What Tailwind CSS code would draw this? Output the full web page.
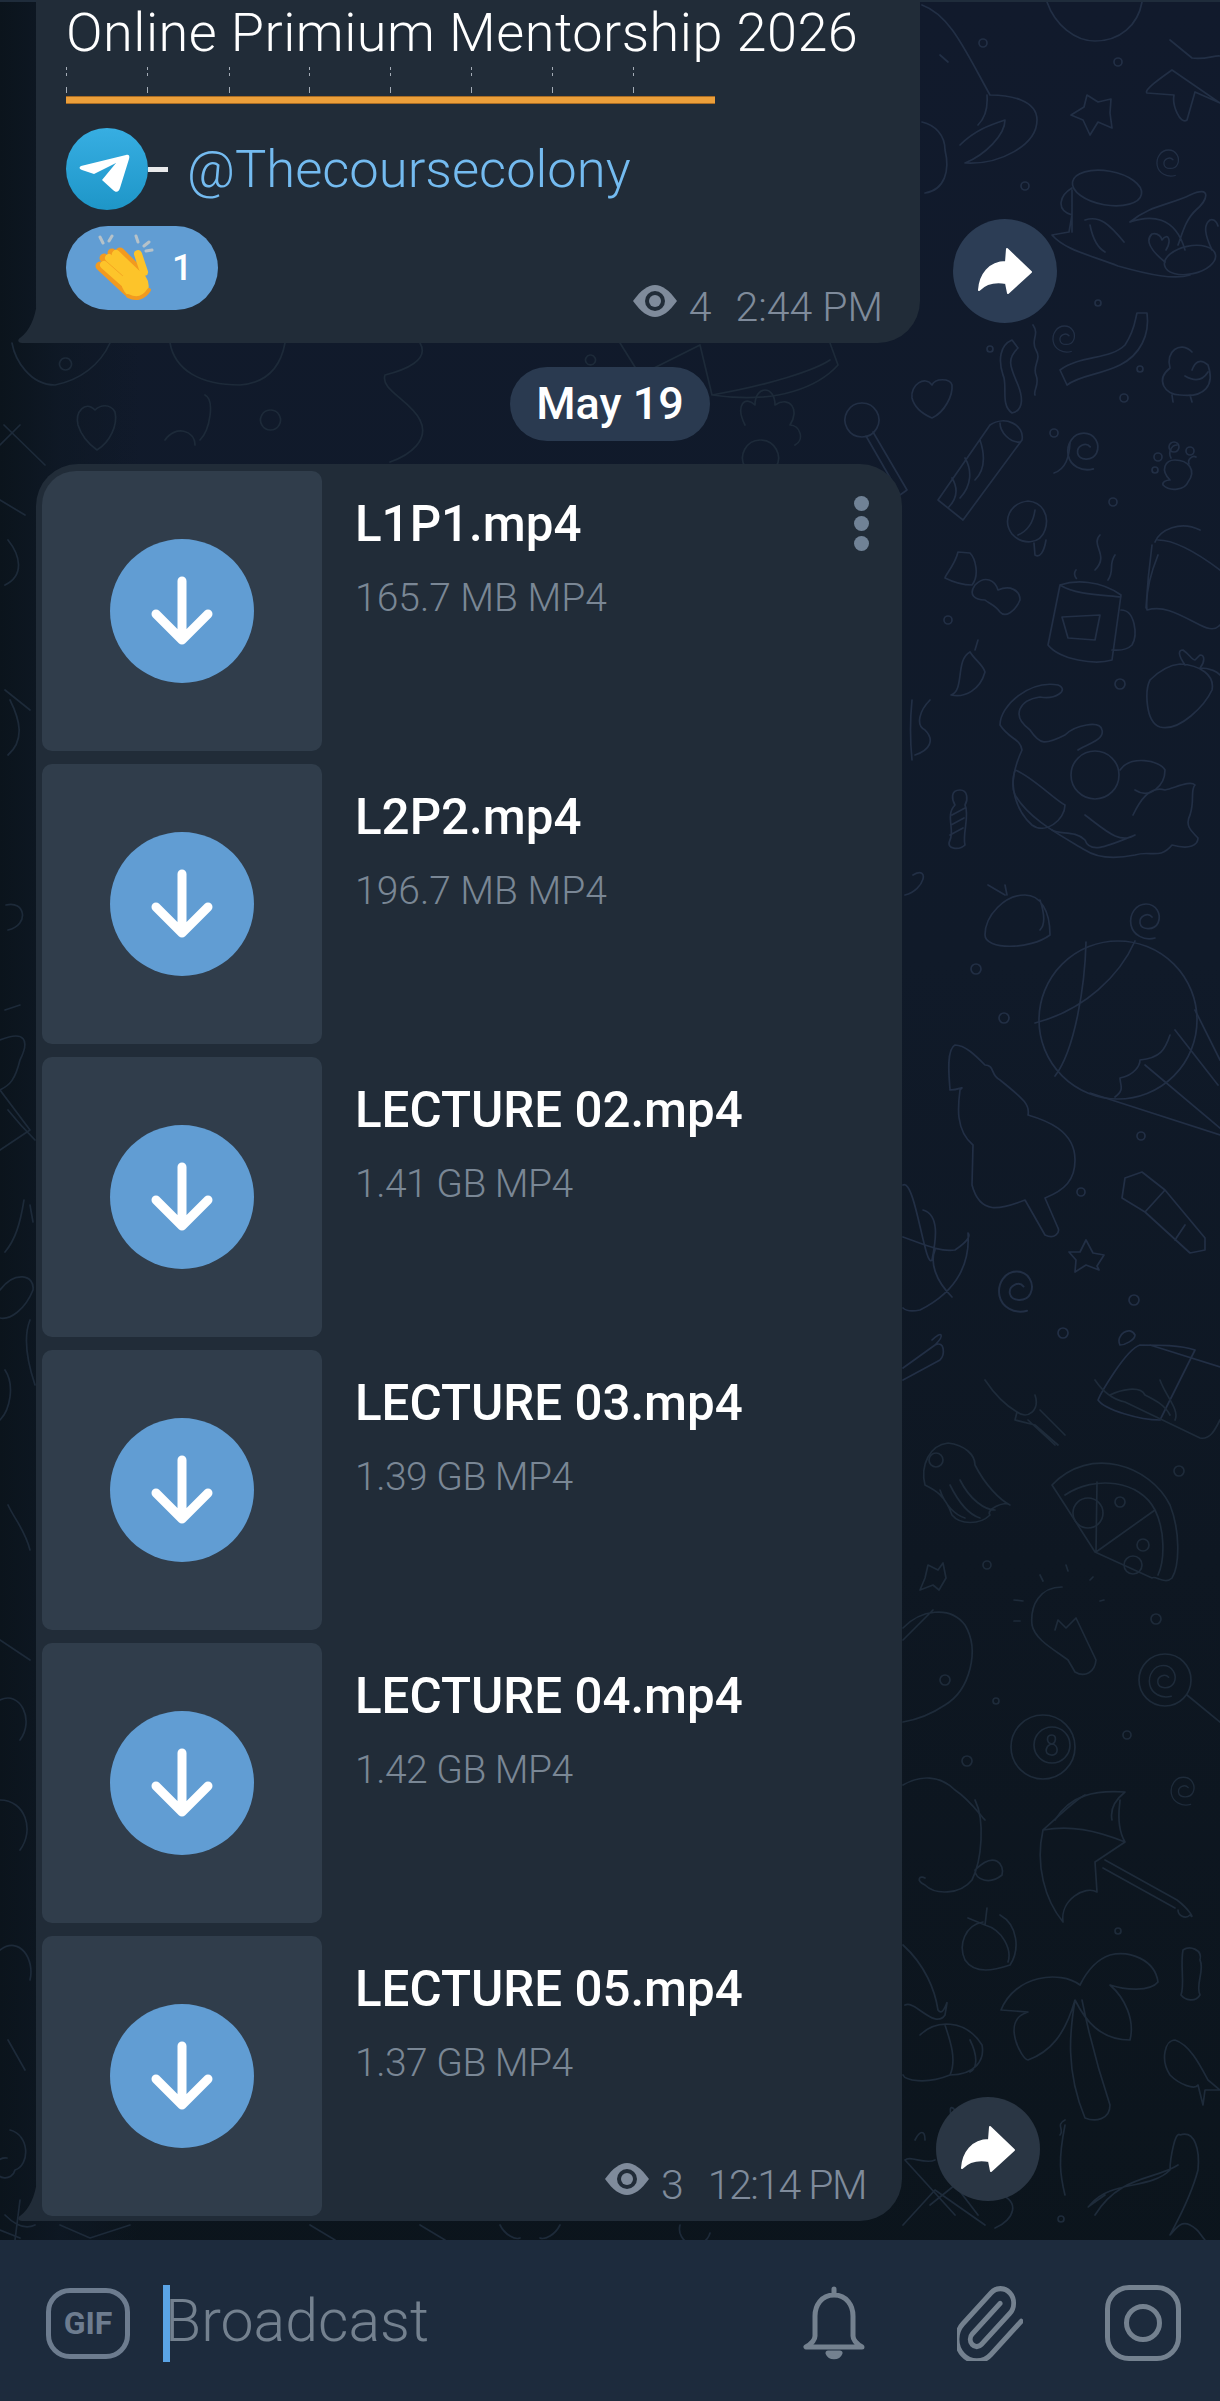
<!DOCTYPE html>
<html lang="en">
<head>
    <meta charset="UTF-8">
    <meta name="viewport" content="width=device-width, initial-scale=1.0">
    <title>Broadcast</title>
    <script src="https://cdn.jsdelivr.net/npm/@tailwindcss/browser@4"></script>
</head>
<body class="bg-[#0e1722]">
<div class="relative w-[1220px] h-[2401px] overflow-hidden flex flex-col font-['Roboto',sans-serif] bg-[linear-gradient(180deg,#111a2c_0%,#101a29_40%,#0e1722_65%,#0b141b_100%)]">

    <!-- wallpaper -->
    <div class="absolute inset-0 bg-[linear-gradient(90deg,#0b141c_0px,#0e1824cc_60px,#0e182400_140px)]"></div>
    <svg class="absolute inset-0" width="1220" height="2401" viewBox="0 0 1220 2401" fill="none" stroke-width="1.7" stroke-linecap="round" stroke-linejoin="round">
        <defs>
            <path id="spiral" d="M4 -3 C0 -8 -9 -4 -8 3 C-7 10 6 11 10 3 C14 -6 8 -16 -2 -16 C-12 -16 -19 -6 -17 5 C-15 15 -4 21 7 18"/>
        </defs>
        <g stroke="#222f45">
            <!-- top right -->
            <path d="M1047 2C1055 25 1075 41 1095 41C1120 41 1138 25 1142 2"/>
            <path d="M922 5C950 15 965 50 990 95C1010 95 1037 100 1037 120C1037 145 1000 165 965 163C985 155 1005 135 1005 120C990 125 975 130 960 145M987 95C988 108 985 118 978 125"/>
            <path d="M922 122C935 125 945 135 945 150C950 170 945 190 925 193M940 55L948 62"/>
            <path d="M1170 40L1192 58C1205 60 1215 55 1220 56M1220 103L1195 92L1187 120C1180 125 1172 105 1174 95L1147 93C1143 90 1165 75 1172 70Z"/>
            <path d="M1087 95L1098 102L1111 99L1110 113L1112 128L1098 122L1090 135L1083 120L1071 115L1084 107Z"/>
            <circle cx="983" cy="43" r="4"/><circle cx="1118" cy="62" r="4"/><circle cx="1025" cy="186" r="4"/><circle cx="1098" cy="303" r="3"/><circle cx="990" cy="349" r="3"/><circle cx="1140" cy="369" r="3"/><circle cx="1124" cy="398" r="4"/><circle cx="1054" cy="433" r="4"/><circle cx="1113" cy="502" r="4"/><circle cx="948" cy="620" r="4"/><circle cx="1120" cy="684" r="5"/>
            <use href="#spiral" transform="translate(1170 162) scale(.75)"/>
            <use href="#spiral" transform="translate(1066 338) scale(.75)"/>
            <use href="#spiral" transform="translate(1086 450) scale(1.05)"/>
            <ellipse cx="1107" cy="188" rx="35" ry="17" transform="rotate(10 1107 188)"/>
            <path d="M1072 188C1060 195 1055 210 1072 215L1069 232L1052 235C1065 250 1090 255 1118 266C1150 275 1175 280 1190 275M1072 190L1072 232M1085 220C1100 215 1110 225 1124 242M1090 225C1093 240 1098 248 1105 252M1130 222C1150 205 1170 205 1190 195C1212 185 1208 200 1196 210C1185 220 1182 235 1178 245M1130 222C1150 215 1175 215 1185 250"/>
            <ellipse cx="1190" cy="260" rx="26" ry="14" transform="rotate(-12 1190 260)"/>
            <path d="M1165 262C1150 250 1145 240 1152 234C1158 232 1162 238 1162 240C1168 232 1172 240 1166 250M1212 250C1205 235 1203 225 1210 220C1216 218 1218 226 1218 226"/>
            <path d="M1060 370C1080 355 1110 360 1125 345C1135 330 1135 320 1137 313L1147 313C1150 335 1140 355 1120 365C1100 375 1080 375 1067 385Z"/>
            <path d="M1192 352C1180 340 1165 352 1170 368C1155 380 1165 395 1180 395C1205 398 1215 385 1208 365C1200 358 1195 362 1192 370M1172 395L1173 402M1190 395L1192 402M1185 376C1195 382 1203 380 1208 372"/>
            <path d="M932 385C925 375 910 385 912 398C915 410 925 415 932 418C945 412 953 395 952 385C950 378 935 378 932 385Z"/>
            <path d="M1033 325C1040 335 1030 340 1036 350C1042 360 1032 365 1036 375C1040 385 1033 390 1035 395M1012 340C1000 345 998 360 1003 375C1008 385 1000 405 1012 413C1025 410 1022 395 1018 385C1012 370 1005 360 1018 348Z"/>
            <path d="M990 425L938 500L963 520L1022 440C1025 425 1005 415 990 425ZM1000 423C1000 432 1010 443 1020 442M980 440C985 455 985 470 975 480M965 458C972 470 972 485 960 498M952 478C958 488 958 498 948 508"/>
            <path d="M862 403a17 17 0 1 1 -.1 0M873 432L907 490L900 495L866 436"/>
            <path d="M1070 443c-1 14 -4 26 -16 30M1177 445c-6 0 -9 8 -6 13M1196 457c-3 -2 -9 2 -7 7"/>
            <path d="M1170 480C1160 470 1165 460 1175 460C1188 460 1197 470 1188 482C1185 490 1170 492 1163 485C1162 482 1166 480 1170 480Z"/>
            <circle cx="1158" cy="457" r="4"/><circle cx="1174" cy="447" r="5"/><circle cx="1155" cy="470" r="3"/><circle cx="1190" cy="451" r="4"/>
            <path d="M1028 501C1010 503 1002 520 1012 534C1022 545 1040 545 1045 530C1050 515 1042 502 1028 501ZM1035 510C1033 525 1025 532 1018 535M1034 543L1035 555C1040 558 1044 552 1046 540"/>
            <path d="M958 552C955 565 945 575 945 578C955 583 965 585 972 585C980 575 975 558 970 553ZM975 585C985 575 995 580 998 590C1010 585 1020 590 1020 600C1015 612 1005 618 1000 612C995 605 988 603 985 600C975 600 968 595 975 585Z"/>
            <path d="M1158 555C1152 570 1145 590 1147 610C1165 605 1180 615 1200 625C1210 630 1215 630 1220 625M1158 540C1175 540 1200 555 1220 570M1152 545C1150 560 1147 590 1146 608M1155 542C1160 530 1180 520 1200 530"/>
            <path d="M1060 585L1048 645C1060 660 1095 665 1112 660L1121 595C1100 580 1075 580 1060 585ZM1060 585C1075 595 1105 595 1121 597M1121 610C1135 610 1138 635 1132 645C1125 652 1115 650 1112 650M1062 617L1100 615L1095 640L1068 638Z"/>
            <path d="M1076 570C1072 575 1078 580 1076 578M1100 535C1090 545 1110 555 1095 570M1115 555C1108 565 1115 570 1108 580"/>
            <path d="M1180 664C1200 665 1215 675 1212 690C1205 705 1180 732 1160 727C1145 722 1145 690 1150 680C1160 670 1170 665 1180 664ZM1185 665C1178 655 1178 650 1183 650C1190 655 1192 660 1195 660L1200 655C1205 655 1205 662 1200 668C1210 668 1218 672 1220 675"/>
            <path d="M970 652C955 660 965 690 951 695C965 698 980 690 985 672C983 665 975 660 970 652M975 650L978 640"/>
            <path d="M1058 685C1030 680 1000 705 1000 725C1010 740 1020 738 1022 750C1015 765 1010 785 1015 795C1030 820 1060 835 1085 850C1100 860 1120 858 1135 855C1150 850 1160 860 1172 845C1190 850 1198 845 1198 838C1190 830 1185 825 1190 815C1195 800 1190 790 1195 785C1190 780 1175 788 1165 790C1150 785 1140 800 1133 815M1058 685C1070 690 1055 700 1040 697C1020 700 1010 715 1030 730C1040 745 1045 745 1065 735C1075 725 1100 720 1102 730C1105 740 1085 745 1078 750"/>
            <circle cx="1095" cy="775" r="24"/>
            <path d="M1015 770C1030 775 1055 800 1065 805C1065 820 1045 835 1032 825C1015 810 1010 785 1015 770ZM1085 815C1105 830 1120 845 1135 835C1110 845 1090 855 1085 840C1075 830 1060 835 1052 830M1120 770C1130 755 1160 760 1165 770C1165 785 1150 800 1135 790"/>
            <path d="M930 700C920 710 915 725 925 730C935 740 930 750 915 755M912 700C910 720 910 740 912 760M913 875C930 865 925 890 905 895"/>
            <path d="M960 790C950 790 952 800 955 805C945 815 955 830 950 840C945 850 960 850 965 845C962 835 970 815 965 805C968 800 968 790 960 790ZM952 815L965 808M951 825L964 818M950 835L963 828"/>
            <path d="M1025 895C1005 895 985 915 985 935C985 950 1030 950 1050 935C1050 910 1040 895 1025 895ZM988 885L1005 895M1005 885L1007 895M1040 900C1045 915 1045 925 1040 930"/>
            <use href="#spiral" transform="translate(1148 920) scale(1)"/>
            <!-- balloon and tree -->
            <circle cx="1118" cy="1020" r="79"/>
            <path d="M1086 942C1085 985 1075 1050 1055 1076M1135 941C1120 975 1085 1010 1035 1023M1115 1097C1125 1090 1120 1085 1120 1078C1135 1075 1140 1065 1140 1060C1160 1058 1165 1050 1170 1035M1090 1093L1220 1135M1175 1030L1218 1085M1145 1065L1220 1128M1195 1010L1220 1060"/>
            <path d="M955 1045C945 1050 950 1085 950 1090C960 1090 965 1085 960 1090C958 1105 955 1130 973 1145L972 1185C980 1215 1000 1210 1025 1200L1045 1235C1055 1240 1060 1232 1058 1228L1045 1198C1065 1190 1075 1180 1075 1160C1075 1130 1045 1120 1028 1115C1030 1105 1025 1100 1000 1080C990 1075 995 1065 985 1065C975 1055 965 1045 955 1045Z"/>
            <path d="M1125 1178L1142 1172L1165 1190L1145 1212L1122 1198ZM1145 1212L1190 1253L1205 1250L1205 1238L1165 1190M1175 1240L1185 1225"/>
            <circle cx="1141" cy="1136" r="4"/><circle cx="1081" cy="1192" r="4"/><circle cx="976" cy="969" r="5"/><circle cx="1004" cy="1018" r="5"/><circle cx="1134" cy="1300" r="5"/><circle cx="1063" cy="1333" r="5"/>
            <path d="M1086 1240L1093 1253L1104 1255L1097 1266L1099 1270L1086 1265L1075 1272L1076 1260L1069 1252L1080 1252Z"/>
            <path d="M923 1210C940 1215 936 1240 932 1260C925 1270 915 1178 903 1185M903 1237C925 1245 940 1252 955 1250C970 1240 970 1235 968 1233C970 1260 960 1290 920 1310C910 1312 905 1310 903 1308M935 1250C930 1262 935 1280 952 1297"/>
            <use href="#spiral" transform="translate(1019 1290) scale(1.15)"/>
            <path d="M1120 1345C1115 1335 1130 1325 1135 1335C1135 1340 1125 1345 1120 1345ZM1140 1345C1125 1350 1100 1395 1098 1400C1105 1410 1140 1420 1160 1420L1195 1350C1180 1345 1160 1345 1140 1345ZM1150 1345L1220 1367"/>
            <path d="M903 1368L935 1345C945 1340 945 1355 940 1360L903 1380M935 1345C945 1335 942 1330 932 1340"/>
        </g>
        <g stroke="#1e2b3a">
            <!-- lower right -->
            <path d="M985 1380C995 1395 1005 1405 1017 1412L1015 1420L1035 1425L1058 1445M1028 1420L1055 1445M1040 1410L1065 1435M1035 1395C1040 1410 1028 1420 1017 1412"/>
            <path d="M1095 1380C1105 1395 1115 1400 1125 1402L1200 1438C1210 1440 1215 1430 1220 1420M1110 1395C1120 1390 1140 1385 1145 1395C1155 1400 1165 1405 1170 1415M1160 1380C1165 1395 1180 1410 1175 1420"/>
            <path d="M948 1443C930 1445 920 1465 925 1485C935 1490 945 1495 952 1515C960 1525 980 1525 990 1515C985 1510 1005 1500 1010 1505C1000 1500 985 1485 975 1465C975 1455 965 1445 948 1443ZM940 1490C945 1505 955 1515 965 1518M950 1485C960 1505 970 1515 980 1518M960 1480C970 1500 985 1510 995 1510"/>
            <circle cx="936" cy="1460" r="7"/>
            <path d="M1052 1485C1090 1445 1150 1465 1170 1505C1180 1530 1180 1565 1172 1578C1165 1585 1155 1575 1152 1578L1095 1552L1065 1505ZM1065 1495C1095 1475 1140 1480 1155 1510C1165 1530 1165 1560 1158 1575M1097 1482L1096 1552L1155 1510"/>
            <circle cx="1088" cy="1513" r="15"/><circle cx="1120" cy="1502" r="5"/><circle cx="1143" cy="1545" r="6"/><circle cx="1133" cy="1565" r="9"/>
            <circle cx="1179" cy="1471" r="5"/><circle cx="987" cy="1565" r="4"/><circle cx="1156" cy="1619" r="5"/><circle cx="996" cy="1701" r="3"/><circle cx="1127" cy="1735" r="4"/><circle cx="967" cy="1761" r="5"/><circle cx="945" cy="1680" r="5"/><circle cx="1118" cy="1931" r="3"/><circle cx="1061" cy="2219" r="3"/>
            <path d="M928 1565L938 1570L943 1563L946 1578L939 1590L933 1585L920 1590L925 1578Z"/>
            <path d="M1062 1587C1040 1587 1030 1605 1032 1625C1035 1640 1055 1650 1068 1660L1075 1672C1085 1678 1095 1672 1096 1660L1076 1618L1066 1628L1058 1620L1055 1630M1014 1600L1023 1601M1014 1621L1020 1621M1040 1575L1043 1581M1066 1565L1068 1571M1090 1580L1093 1577M1100 1601L1104 1600"/>
            <circle cx="1165" cy="1680" r="26"/>
            <use href="#spiral" transform="translate(1165 1680) scale(.9)"/>
            <path d="M1187 1695L1220 1722"/>
            <circle cx="1043" cy="1747" r="32"/><circle cx="1052" cy="1745" r="18"/>
            <path d="M1052 1735c-6 0 -6 8 0 9c7 1 7 12 -1 11c-8 -1 -5 -10 1 -11c4 -1 5 -9 0 -9"/>
            <path d="M903 1628C920 1610 950 1605 965 1625C980 1650 970 1690 945 1705C930 1715 915 1720 903 1722M903 1640L933 1610"/>
            <path d="M903 1785C920 1775 940 1775 955 1790C970 1800 980 1815 985 1820M1055 1820C1070 1795 1095 1790 1125 1792C1115 1800 1110 1810 1112 1820"/>
            <use href="#spiral" transform="translate(1185 1790) scale(.8)"/>
            <path d="M1043 1830C1070 1825 1095 1830 1125 1842L1095 1862L1097 1892C1085 1885 1060 1900 1063 1922C1045 1900 1035 1865 1043 1830ZM1043 1830C1060 1815 1075 1800 1085 1795M1125 1842C1115 1825 1120 1805 1120 1800M1105 1860L1177 1900C1190 1910 1195 1920 1190 1915C1185 1920 1178 1915 1178 1910M1103 1868L1175 1908"/>
            <path d="M975 1800C985 1820 982 1860 972 1880C960 1895 935 1895 925 1885C915 1880 920 1875 925 1878M975 1870C995 1850 1005 1865 1002 1875C990 1885 975 1880 975 1870Z"/>
            <path d="M983 1922C965 1925 958 1945 965 1960C975 1975 995 1970 1010 1965C1020 1950 1018 1925 1000 1915M968 1918L985 1925L987 1908M985 1925C1003 1930 1012 1950 1008 1962"/>
            <path d="M1080 1985C1060 1970 1015 1975 1001 2010L1028 2012C1000 2020 1022 2060 1028 2060C1050 2052 1065 2035 1075 2000C1085 2020 1100 2040 1130 2040C1135 2020 1125 1998 1110 1985C1125 1990 1150 1992 1158 1982C1155 1960 1130 1950 1110 1955C1095 1960 1085 1975 1080 1985ZM1075 2000C1070 2030 1065 2070 1085 2118C1095 2122 1110 2120 1110 2105C1100 2075 1090 2040 1082 2000"/>
            <path d="M1183 1950C1190 1945 1203 1950 1200 1960C1205 1970 1195 1985 1200 1995C1195 2003 1185 2000 1181 1995C1185 1985 1180 1965 1183 1950Z"/>
            <path d="M1175 2040C1165 2040 1160 2060 1170 2075C1180 2085 1195 2090 1198 2085L1203 2105L1205 2090L1220 2090L1208 2080C1200 2065 1190 2045 1175 2040Z"/>
            <path d="M903 1945C925 1965 935 1990 938 2010C945 2020 950 1985 945 2015C935 2030 915 2000 905 2005M920 2035C935 2020 965 2018 982 2045C985 2060 975 2075 950 2075C925 2085 905 2080 903 2075M945 2025C950 2040 957 2060 950 2075M970 2040C980 2060 975 2070 970 2072"/>
            <path d="M1065 2120C1055 2125 1065 2130 1060 2135M1065 2125C1058 2160 1060 2175 1065 2195M1090 2205C1110 2180 1150 2190 1170 2170C1170 2160 1175 2130 1180 2135C1195 2130 1200 2150 1198 2170C1190 2200 1175 2225 1170 2235C1175 2230 1180 2220 1190 2225C1200 2230 1200 2235 1205 2240M1095 2215C1120 2175 1155 2180 1178 2165M1105 2195C1090 2205 1085 2210 1090 2205"/>
            <path d="M950 2125C960 2130 965 2110 955 2110C945 2100 955 2125 950 2125ZM905 2160C910 2155 925 2165 935 2160M915 2140C920 2130 925 2130 925 2140M903 2225L935 2190L985 2225M930 2205L955 2185L978 2215M905 2160L955 2215M1000 2195C1020 2200 1015 2220 995 2228"/>
        </g>
        <g stroke="#1d2a39">
            <!-- between the bubbles and down the left edge -->
            <path d="M12 343C15 360 30 385 55 385C80 380 100 365 110 343M65 358a6 6 0 1 0 1 0M170 343C175 370 200 385 240 385C265 383 280 370 285 343"/>
            <path d="M420 343C430 360 405 370 385 375C380 390 410 400 420 420C430 440 410 455 390 462M590 355a5 5 0 1 0 1 0M620 343L640 375L700 345M700 345L712 395C780 405 820 385 838 365L830 343M712 395C770 385 815 370 830 360"/>
            <path d="M95 410C85 400 75 412 78 425C82 438 90 445 97 450C110 442 118 425 115 412C110 403 100 405 95 410Z"/>
            <path d="M4 425L45 465M20 425L0 445M165 440C175 425 195 430 195 445M200 440C210 430 215 400 205 395M270 410a10 10 0 1 0 1 0"/>
            <path d="M760 440a18 18 0 1 0 1 0M745 425C735 405 745 395 755 405C755 385 775 385 775 405C790 395 800 410 790 425C800 425 805 440 795 445"/>
            <path d="M0 500L25 515M8 540C20 555 25 575 5 585M5 690L30 710M10 700C20 720 25 740 8 755M6 905C25 900 30 925 8 930M5 1010L20 1005M0 1040C25 1030 30 1040 20 1060C15 1080 10 1085 0 1090"/>
            <path d="M0 1090L30 1130L0 1150M8 1110C20 1125 30 1135 35 1140M24 1200C20 1225 15 1240 5 1252M30 1205L33 1222M0 1290C15 1270 35 1275 33 1290C25 1310 10 1320 0 1318M30 1320C22 1340 30 1370 35 1385M5 1370C15 1385 10 1410 0 1420"/>
            <path d="M8 1505C15 1520 25 1530 30 1550M0 1640L30 1660M0 1700C20 1690 35 1720 20 1740M0 1800C25 1800 35 1830 20 1850M0 1950C20 1935 35 1960 30 1980M8 2040L25 2070M10 2130C30 2135 30 2165 15 2170a10 10 0 1 1 -8 -12M20 2200L15 2240M5 2215C15 2225 25 2230 35 2225"/>
            <path d="M0 2230L20 2238M60 2225L90 2238L130 2225M310 2225L335 2240M420 2225L445 2240M500 2225C505 2235 515 2240 520 2238M560 2225C555 2235 545 2240 540 2238M680 2225a10 10 0 0 0 30 8"/>
        </g>
    </svg>
    <div class="absolute top-0 left-0 right-0 h-[2px] bg-[#1f2c3b]"></div>

    <!-- messages -->
    <main class="relative flex-1 flex flex-col pl-[36px] overflow-hidden">

        <div class="flex items-end gap-[33px]">
            <div class="relative w-[884px] h-[343px] bg-[#212c38] rounded-br-[42px] pl-[30px] pt-[3px] shrink-0">
                <svg class="absolute left-[-18px] bottom-0" width="19" height="40" viewBox="0 0 19 40"><path d="M19 0V40H4C0 40 -1 37 2 35C12 28 17 14 19 0Z" fill="#212c38"/></svg>
                <p class="text-[54px] leading-[60px] tracking-[0.5px] text-white font-light">Online Primium Mentorship 2026</p>
                <svg class="mt-[4px] block" width="600" height="26" viewBox="0 0 600 26" stroke="#a4acb6" stroke-width="1">
                    <path stroke-dasharray="3 3" d="M.5 0V12M81.5 0V12M163.5 0V12M243.5 0V12M324.5 0V12M405.5 0V12M486.5 0V12M567.5 0V12"/>
                    <path d="M.5 20V26M81.5 20V26M163.5 20V26M243.5 20V26M324.5 20V26M405.5 20V26M486.5 20V26M567.5 20V26"/>
                </svg>
                <div class="mt-[3px] w-[649px] h-[8px] bg-[#ec9f3a] border-y border-[#a86c25]"></div>
                <div class="mt-[24px] flex items-center h-[82px]">
                    <svg width="82" height="82" viewBox="0 0 82 82">
                        <defs><linearGradient id="tg" x1="0" y1="0" x2="0" y2="1"><stop offset="0" stop-color="#37aee2"/><stop offset="1" stop-color="#1e96c8"/></linearGradient></defs>
                        <circle cx="41" cy="41" r="41" fill="url(#tg)"/>
                        <path d="M15 38L60 27C63 26 64 28 63 31L54 60C53 64 50 65 47 62L36 52L50 35L28 46L16 42C13 41 13 39 15 38Z" fill="#fff"/>
                    </svg>
                    <span class="w-[20px] h-[5px] bg-white/90"></span>
                    <span class="ml-[19px] text-[52.5px] font-light text-[#74bbf0] leading-none">@Thecoursecolony</span>
                </div>
                <div class="mt-[16px] w-[152px] h-[84px] rounded-[42px] bg-[#619dd3] flex items-center pl-[28px] gap-[16px]">
                    <svg width="62" height="68" viewBox="0 0 62 68" fill="none" stroke-linecap="round">
                        <path d="M9 9L6 3M15 7L18 2M44 8L42 2M50 12L55 8M52 17L58 16" stroke="#b6c2c9" stroke-width="3"/>
                        <path d="M6 32L34 58M10 24L38 50M18 19L42 44M26 18L46 38" stroke="#f29a1f" stroke-width="9"/>
                        <path d="M10 31L36 54M15 24L41 47M22 20L45 42" stroke="#fdc42a" stroke-width="8"/>
                        <path d="M44 20L50 38" stroke="#fdc42a" stroke-width="8"/>
                        <ellipse cx="41" cy="50" rx="13" ry="15" transform="rotate(-35 41 50)" fill="#fdc42a"/>
                        <path d="M34 62C42 66 50 64 55 56" stroke="#f29a1f" stroke-width="4"/>
                    </svg>
                    <span class="text-[36px] font-medium text-white leading-none">1</span>
                </div>
                <div class="absolute right-[37px] bottom-[16px] flex items-center text-[41px] leading-[40px] font-light text-[#7f8b9b]">
                    <svg class="mt-[-12px]" width="44" height="32" viewBox="0 0 44 32"><path d="M0 16C8 5 15 0 22 0C29 0 36 5 44 16C36 27 29 32 22 32C15 32 8 27 0 16Z" fill="#7f8b9b"/><circle cx="22" cy="16" r="10" fill="#212c38"/><circle cx="22" cy="16" r="6" fill="#7f8b9b"/></svg>
                    <span class="ml-[12px]">4</span>
                    <span class="ml-[24px]">2:44 PM</span>
                </div>
            </div>
            <button class="w-[104px] h-[104px] rounded-full bg-[#2c3d55] mb-[20px] shrink-0">
                <svg width="104" height="104" viewBox="0 0 104 104"><path d="M26 71C27 56 36 43 53 43L54 30L78 53L55 74L53 64C42 62 33 64 26 71Z" fill="#fff" stroke="#fff" stroke-width="2" stroke-linejoin="round"/></svg>
            </button>
        </div>

        <div class="mt-[24px] ml-[474px] w-[200px] h-[74px] rounded-[37px] bg-[#2a3a50] flex items-center justify-center text-[45px] font-medium text-white">May 19</div>

        <div class="mt-[23px] flex items-end gap-[34px]">
            <div class="relative w-[866px] bg-[#212c38] rounded-t-[42px] rounded-br-[42px] pt-[7px] pl-[6px] pb-[5px] flex flex-col gap-[13px] shrink-0">
                <svg class="absolute left-[-18px] bottom-0" width="19" height="40" viewBox="0 0 19 40"><path d="M19 0V40H4C0 40 -1 37 2 35C12 28 17 14 19 0Z" fill="#212c38"/></svg>

                <div class="relative flex gap-[33px]">
                    <div class="w-[280px] h-[280px] rounded-[10px] rounded-tl-[34px] bg-[#303d4b] flex items-center justify-center">
                        <div class="w-[144px] h-[144px] rounded-full bg-[#619dd3] flex items-center justify-center">
                            <svg width="64" height="70" viewBox="0 0 64 70" fill="none" stroke="#fff" stroke-width="9" stroke-linecap="round" stroke-linejoin="round"><path d="M32 5V63M6 38L32 64L58 38"/></svg>
                        </div>
                    </div>
                    <div class="pt-[24px]">
                        <p class="text-[49.3px] leading-[58px] font-medium text-white">L1P1.mp4</p>
                        <p class="mt-[22px] text-[39px] leading-[46px] font-light text-[#7a8795]">165.7 MB MP4</p>
                    </div>
                    <div class="absolute right-[33px] top-[25px] flex flex-col gap-[5px]">
                        <span class="block w-[15px] h-[15px] rounded-full bg-[#708296]"></span>
                        <span class="block w-[15px] h-[15px] rounded-full bg-[#708296]"></span>
                        <span class="block w-[15px] h-[15px] rounded-full bg-[#708296]"></span>
                    </div>
                </div>

                <div class="flex gap-[33px]">
                    <div class="w-[280px] h-[280px] rounded-[10px] bg-[#303d4b] flex items-center justify-center">
                        <div class="w-[144px] h-[144px] rounded-full bg-[#619dd3] flex items-center justify-center">
                            <svg width="64" height="70" viewBox="0 0 64 70" fill="none" stroke="#fff" stroke-width="9" stroke-linecap="round" stroke-linejoin="round"><path d="M32 5V63M6 38L32 64L58 38"/></svg>
                        </div>
                    </div>
                    <div class="pt-[24px]">
                        <p class="text-[49.3px] leading-[58px] font-medium text-white">L2P2.mp4</p>
                        <p class="mt-[22px] text-[39px] leading-[46px] font-light text-[#7a8795]">196.7 MB MP4</p>
                    </div>
                </div>

                <div class="flex gap-[33px]">
                    <div class="w-[280px] h-[280px] rounded-[10px] bg-[#303d4b] flex items-center justify-center">
                        <div class="w-[144px] h-[144px] rounded-full bg-[#619dd3] flex items-center justify-center">
                            <svg width="64" height="70" viewBox="0 0 64 70" fill="none" stroke="#fff" stroke-width="9" stroke-linecap="round" stroke-linejoin="round"><path d="M32 5V63M6 38L32 64L58 38"/></svg>
                        </div>
                    </div>
                    <div class="pt-[24px]">
                        <p class="text-[49.3px] leading-[58px] font-medium text-white">LECTURE 02.mp4</p>
                        <p class="mt-[22px] text-[39px] leading-[46px] tracking-[-0.5px] font-light text-[#7a8795]">1.41 GB MP4</p>
                    </div>
                </div>

                <div class="flex gap-[33px]">
                    <div class="w-[280px] h-[280px] rounded-[10px] bg-[#303d4b] flex items-center justify-center">
                        <div class="w-[144px] h-[144px] rounded-full bg-[#619dd3] flex items-center justify-center">
                            <svg width="64" height="70" viewBox="0 0 64 70" fill="none" stroke="#fff" stroke-width="9" stroke-linecap="round" stroke-linejoin="round"><path d="M32 5V63M6 38L32 64L58 38"/></svg>
                        </div>
                    </div>
                    <div class="pt-[24px]">
                        <p class="text-[49.3px] leading-[58px] font-medium text-white">LECTURE 03.mp4</p>
                        <p class="mt-[22px] text-[39px] leading-[46px] tracking-[-0.5px] font-light text-[#7a8795]">1.39 GB MP4</p>
                    </div>
                </div>

                <div class="flex gap-[33px]">
                    <div class="w-[280px] h-[280px] rounded-[10px] bg-[#303d4b] flex items-center justify-center">
                        <div class="w-[144px] h-[144px] rounded-full bg-[#619dd3] flex items-center justify-center">
                            <svg width="64" height="70" viewBox="0 0 64 70" fill="none" stroke="#fff" stroke-width="9" stroke-linecap="round" stroke-linejoin="round"><path d="M32 5V63M6 38L32 64L58 38"/></svg>
                        </div>
                    </div>
                    <div class="pt-[24px]">
                        <p class="text-[49.3px] leading-[58px] font-medium text-white">LECTURE 04.mp4</p>
                        <p class="mt-[22px] text-[39px] leading-[46px] tracking-[-0.5px] font-light text-[#7a8795]">1.42 GB MP4</p>
                    </div>
                </div>

                <div class="flex gap-[33px]">
                    <div class="w-[280px] h-[280px] rounded-[10px] bg-[#303d4b] flex items-center justify-center">
                        <div class="w-[144px] h-[144px] rounded-full bg-[#619dd3] flex items-center justify-center">
                            <svg width="64" height="70" viewBox="0 0 64 70" fill="none" stroke="#fff" stroke-width="9" stroke-linecap="round" stroke-linejoin="round"><path d="M32 5V63M6 38L32 64L58 38"/></svg>
                        </div>
                    </div>
                    <div class="pt-[24px]">
                        <p class="text-[49.3px] leading-[58px] font-medium text-white">LECTURE 05.mp4</p>
                        <p class="mt-[22px] text-[39px] leading-[46px] tracking-[-0.5px] font-light text-[#7a8795]">1.37 GB MP4</p>
                    </div>
                </div>

                <div class="absolute right-[36px] bottom-[16px] flex items-center text-[41px] leading-[40px] font-light text-[#7f8b9b]">
                    <svg class="mt-[-12px]" width="44" height="32" viewBox="0 0 44 32"><path d="M0 16C8 5 15 0 22 0C29 0 36 5 44 16C36 27 29 32 22 32C15 32 8 27 0 16Z" fill="#7f8b9b"/><circle cx="22" cy="16" r="10" fill="#212c38"/><circle cx="22" cy="16" r="6" fill="#7f8b9b"/></svg>
                    <span class="ml-[12px]">3</span>
                    <span class="ml-[24px] tracking-[-1.5px]">12:14 PM</span>
                </div>
            </div>
            <button class="w-[104px] h-[104px] rounded-full bg-[#2a3644] mb-[20px] shrink-0">
                <svg width="104" height="104" viewBox="0 0 104 104"><path d="M26 71C27 56 36 43 53 43L54 30L78 53L55 74L53 64C42 62 33 64 26 71Z" fill="#fff" stroke="#fff" stroke-width="2" stroke-linejoin="round"/></svg>
            </button>
        </div>
    </main>

    <!-- input bar -->
    <footer class="relative h-[161px] shrink-0 bg-[#1d2b3d] flex items-center pl-[46px] pt-[5px]">
        <div class="w-[84px] h-[71px] border-[5px] border-[#6d7c8f] rounded-[24px] flex items-center justify-center text-[32px] leading-none font-bold text-[#6d7c8f]">GIF</div>
        <span class="ml-[33px] w-[7px] h-[77px] bg-[#5aa4e6]"></span>
        <span class="ml-[-5px] mb-[5px] text-[59px] leading-none font-light text-[#74818f]">Broadcast</span>
        <svg class="ml-[373px]" width="64" height="74" viewBox="0 0 64 74" fill="none" stroke="#74818f" stroke-width="5" stroke-linecap="round" stroke-linejoin="round">
            <path d="M32 9C19 9 13 20 13 30V50C13 55 9 58 4 61H60C55 58 51 55 51 50V30C51 20 45 9 32 9ZM32 3V9"/>
            <path d="M26 67C28 72 36 72 38 67Z" fill="#74818f"/>
        </svg>
        <svg class="ml-[91px]" width="66" height="76" viewBox="2 1 20 21" preserveAspectRatio="none" fill="none" stroke="#74818f" stroke-width="1.45" stroke-linecap="round" stroke-linejoin="round"><path d="m21.44 11.05-9.19 9.19a6 6 0 0 1-8.49-8.49l8.57-8.57A4 4 0 1 1 18 8.84l-8.59 8.57a2 2 0 0 1-2.83-2.83l8.49-8.48"/></svg>
        <div class="ml-[82px] w-[76px] h-[76px] border-[5px] border-[#74818f] rounded-[24px] flex items-center justify-center">
            <span class="block w-[38px] h-[38px] rounded-full border-[5px] border-[#74818f]"></span>
        </div>
    </footer>
</div>
</body>
</html>
